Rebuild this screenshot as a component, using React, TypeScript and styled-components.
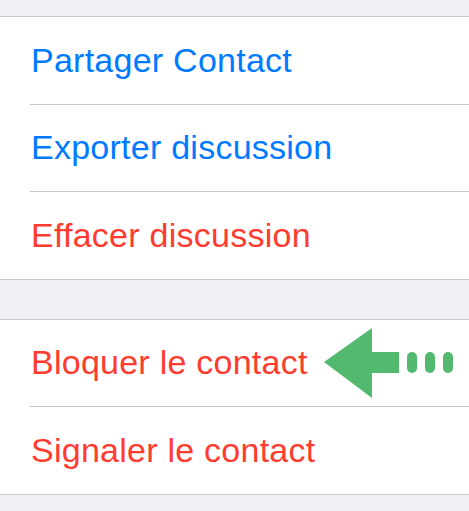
import * as React from "react";
import styled, { createGlobalStyle } from "styled-components";

const GlobalStyle = createGlobalStyle`
  html, body {
    margin: 0;
    padding: 0;
    background: #efeff4;
  }
  body {
    font-family: "Liberation Sans", Arial, sans-serif;
  }
`;

type Tone = "blue" | "red";

const Page = styled.div`
  width: 469px;
  height: 511px;
  background: #efeff4;
  overflow: hidden;
  padding-top: 16px;
  box-sizing: border-box;
`;

const Group = styled.div<{ $gap?: number }>`
  background: #ffffff;
  border-top: 1px solid #c8c7cc;
  border-bottom: 1px solid #c8c7cc;
  margin-top: ${(p) => p.$gap ?? 0}px;
`;

const Row = styled.div<{ $tone: Tone }>`
  position: relative;
  height: 86.5px;
  display: flex;
  align-items: center;
  padding-left: 31px;
  font-size: 34px;
  letter-spacing: 0.25px;
  color: ${(p) => (p.$tone === "blue" ? "#007aff" : "#ff3b30")};
`;

const Separator = styled.div`
  height: 1px;
  margin-left: 30px;
  background: #c8c7cc;
`;

const ArrowMark = styled.svg`
  position: absolute;
  left: 322px;
  top: 50%;
  transform: translateY(-50%);
`;

const Arrow = () => (
  <ArrowMark width="134" height="72" viewBox="0 0 134 72">
    <path d="M2 35 L50 1 L50 25 L77 25 L77 46 L50 46 L50 71 Z" fill="#52b96f" />
    <rect x="85" y="25" width="10" height="21" rx="5" fill="#52b96f" />
    <rect x="103" y="25" width="10" height="21" rx="5" fill="#52b96f" />
    <rect x="121" y="25" width="10" height="21" rx="5" fill="#52b96f" />
  </ArrowMark>
);

export default function App() {
  return (
    <Page>
      <GlobalStyle />
      <Group>
        <Row $tone="blue">Partager Contact</Row>
        <Separator />
        <Row $tone="blue">Exporter discussion</Row>
        <Separator />
        <Row $tone="red">Effacer discussion</Row>
      </Group>
      <Group $gap={39}>
        <Row $tone="red">
          Bloquer le contact
          <Arrow />
        </Row>
        <Separator />
        <Row $tone="red">Signaler le contact</Row>
      </Group>
    </Page>
  );
}
